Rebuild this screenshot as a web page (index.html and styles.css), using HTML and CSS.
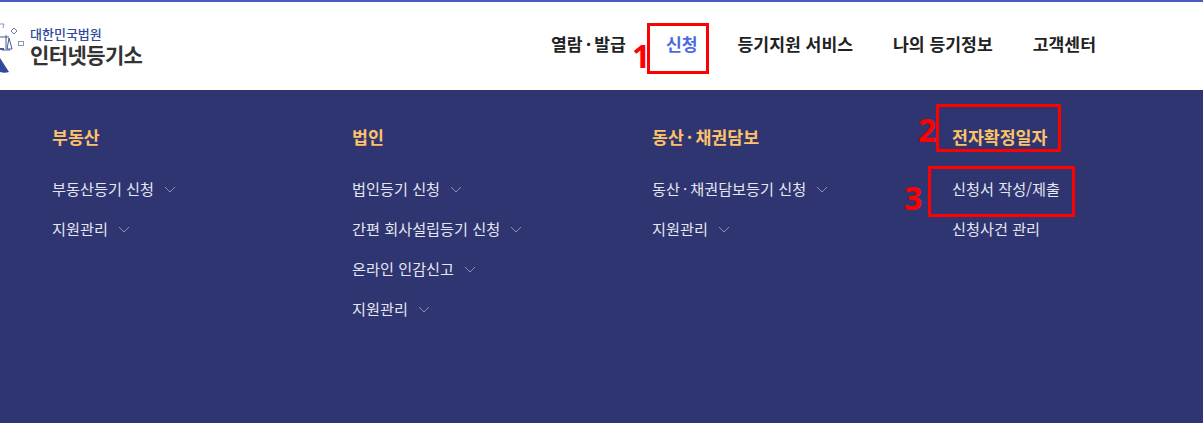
FILE: index.html
```html
<!DOCTYPE html>
<html lang="ko">
<head>
    <meta charset="UTF-8">
    <title>인터넷등기소</title>
    <link rel="stylesheet" href="styles.css">
</head>
<body>
    <header class="header">
        <a class="logo">
            <svg class="logo-mark" width="30" height="72" viewBox="0 0 30 72">
                <path d="M0 47 C3 52 6 56 9 61 C6 62 3 62 0 61 Z" fill="#2f4a9a"/>
                <path d="M0 26 H9 M6 24 V38 M2 39 H10 M9 27 L7 38 H12 Z" stroke="#46598f" stroke-width="1" fill="none"/>
                <path d="M0 38 H4" stroke="#46598f" stroke-width="2"/>
                <path d="M14 17 L17 20 L14 23 L11 20 Z" stroke="#6a78a8" stroke-width="1" fill="none"/>
                <rect x="18.500" y="30.500" width="5" height="4" stroke="#8a96bc" stroke-width="1" fill="none"/>
                <path d="M0 13 H4 L3 17" stroke="#8a96bc" stroke-width="1" fill="none"/>
            </svg>
            <div class="logo-text">
                <span class="logo-sub">대한민국법원</span>
                <span class="logo-main">인터넷등기소</span>
            </div>
        </a>
        <nav class="nav">
            <a>열람<span class="dot">·</span>발급</a>
            <a class="active">신청</a>
            <a>등기지원 서비스</a>
            <a>나의 등기정보</a>
            <a>고객센터</a>
        </nav>
    </header>
    <section class="panel">
        <div class="col">
            <h3>부동산</h3>
            <ul>
                <li>부동산등기 신청<svg class="chev" width="12" height="7" viewBox="0 0 12 7"><path d="M1 1 L6 6 L11 1"/></svg></li>
                <li>지원관리<svg class="chev" width="12" height="7" viewBox="0 0 12 7"><path d="M1 1 L6 6 L11 1"/></svg></li>
            </ul>
        </div>
        <div class="col">
            <h3>법인</h3>
            <ul>
                <li>법인등기 신청<svg class="chev" width="12" height="7" viewBox="0 0 12 7"><path d="M1 1 L6 6 L11 1"/></svg></li>
                <li>간편 회사설립등기 신청<svg class="chev" width="12" height="7" viewBox="0 0 12 7"><path d="M1 1 L6 6 L11 1"/></svg></li>
                <li>온라인 인감신고<svg class="chev" width="12" height="7" viewBox="0 0 12 7"><path d="M1 1 L6 6 L11 1"/></svg></li>
                <li>지원관리<svg class="chev" width="12" height="7" viewBox="0 0 12 7"><path d="M1 1 L6 6 L11 1"/></svg></li>
            </ul>
        </div>
        <div class="col">
            <h3>동산<span class="dot">·</span>채권담보</h3>
            <ul>
                <li>동산<span class="dot">·</span>채권담보등기 신청<svg class="chev" width="12" height="7" viewBox="0 0 12 7"><path d="M1 1 L6 6 L11 1"/></svg></li>
                <li>지원관리<svg class="chev" width="12" height="7" viewBox="0 0 12 7"><path d="M1 1 L6 6 L11 1"/></svg></li>
            </ul>
        </div>
        <div class="col">
            <h3>전자확정일자</h3>
            <ul>
                <li>신청서 작성/제출</li>
                <li>신청사건 관리</li>
            </ul>
        </div>
    </section>

    <!-- annotations drawn over the screenshot -->
    <div class="mark box-1"></div>
    <div class="mark box-2"></div>
    <div class="mark box-3"></div>
    <span class="num num-1">1</span>
    <span class="num num-2">2</span>
    <span class="num num-3">3</span>
</body>
</html>
```
FILE: styles.css
```css
* {
    box-sizing: border-box;
}
html, body {
    height: 100%;
}
body {
    margin: 0;
    font-family: "Noto Sans CJK KR", "Noto Sans", sans-serif;
    background: #2f3570;
    overflow: hidden;
}
.header {
    height: 90px;
    background: #fff;
    border-top: 2px solid #4a5cc0;
    display: flex;
    justify-content: space-between;
    align-items: center;
}
.logo {
    display: flex;
    align-items: center;
}
.logo-mark {
    margin-top: 2px;
    overflow: hidden;
}
.logo-text {
    display: flex;
    flex-direction: column;
    margin-top: 2px;
}
.logo-sub {
    font-size: 13px;
    line-height: 14px;
    color: #2f4a9a;
    font-weight: 500;
}
.logo-main {
    font-size: 21px;
    line-height: 26px;
    color: #333;
    font-weight: 700;
    letter-spacing: -0.6px;
}
.nav {
    display: flex;
    gap: 40px;
    margin-right: 107px;
    margin-top: -6px;
}
.nav a {
    font-size: 17.2px;
    font-weight: 700;
    color: #222;
}
.nav a.active {
    color: #4a6be0;
}
.dot {
    margin: 0 3px;
}
.panel {
    display: grid;
    grid-template-columns: repeat(4, 300px);
    padding: 34px 0 0 52px;
}
.col h3 {
    margin: 0 0 19px;
    font-size: 17.3px;
    line-height: 25px;
    font-weight: 700;
    color: #fdc26a;
}
.col ul {
    list-style: none;
    margin: 0;
    padding: 0;
}
.col li {
    font-size: 15.2px;
    line-height: 40px;
    color: #e4e6f0;
}
.chev {
    margin-left: 10px;
    vertical-align: 2px;
}
.chev path {
    fill: none;
    stroke: #8b90b5;
    stroke-width: 1;
}
.mark {
    position: absolute;
    border: 3px solid #f00;
}
.box-1 {
    left: 647px;
    top: 23px;
    width: 62px;
    height: 51px;
}
.box-2 {
    left: 936px;
    top: 104px;
    width: 125px;
    height: 48px;
}
.box-3 {
    left: 928px;
    top: 166px;
    width: 147px;
    height: 51px;
}
.num {
    position: absolute;
    font-family: "Noto Sans", sans-serif;
    font-weight: 700;
    font-size: 32px;
    line-height: 34px;
    color: #f00;
}
.num-1 {
    left: 632px;
    top: 39px;
}
.num-2 {
    left: 918px;
    top: 113px;
}
.num-3 {
    left: 904px;
    top: 181px;
}
```
